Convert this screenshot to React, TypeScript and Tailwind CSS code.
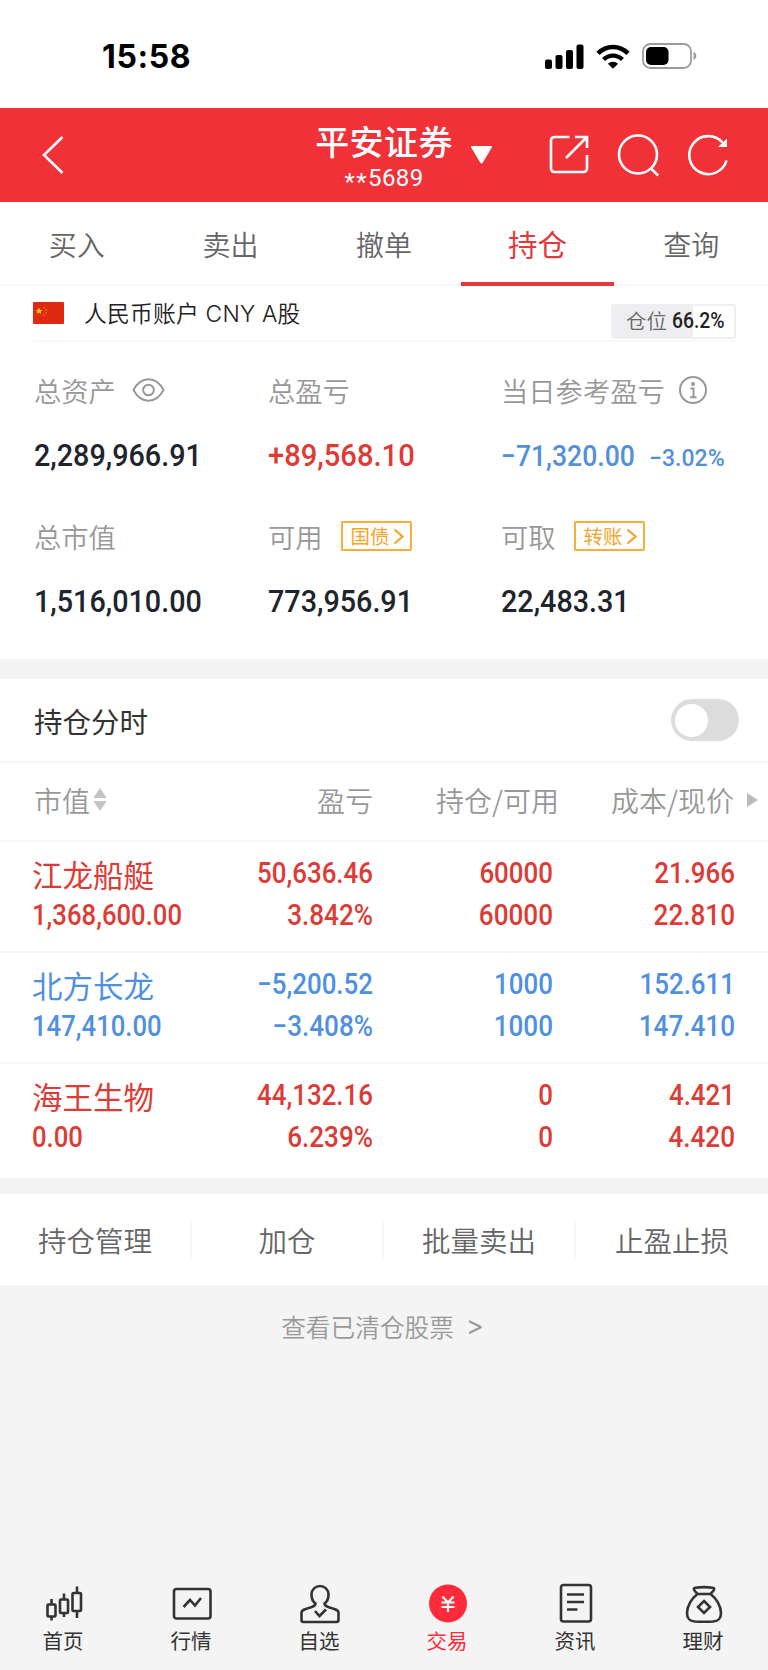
import { useState } from 'react';
import type { ReactNode } from 'react';
import clsx from 'clsx';

type Tone = 'up' | 'down';

type Holding = {
  name: string;
  value: string;
  profit: string;
  rate: string;
  amount: string;
  usable: string;
  cost: string;
  price: string;
  tone: Tone;
};

const TABS = ['买入', '卖出', '撤单', '持仓', '查询'];
const ACTIONS = ['持仓管理', '加仓', '批量卖出', '止盈止损'];

const HOLDINGS: Holding[] = [
  { name: '江龙船艇', value: '1,368,600.00', profit: '50,636.46', rate: '3.842%', amount: '60000', usable: '60000', cost: '21.966', price: '22.810', tone: 'up' },
  { name: '北方长龙', value: '147,410.00', profit: '−5,200.52', rate: '−3.408%', amount: '1000', usable: '1000', cost: '152.611', price: '147.410', tone: 'down' },
  { name: '海王生物', value: '0.00', profit: '44,132.16', rate: '6.239%', amount: '0', usable: '0', cost: '4.421', price: '4.420', tone: 'up' },
];

// Narrow figures used for every amount on the page.
function Num({ children, className, right }: { children: ReactNode; className?: string; right?: boolean }) {
  return (
    <span
      className={clsx(
        'block whitespace-nowrap font-[Roboto,sans-serif] font-medium',
        right ? 'origin-right' : 'origin-left',
        className,
      )}
    >
      {children}
    </span>
  );
}

function StatusBar() {
  return (
    <div className="flex h-[108px] items-start justify-between bg-white pr-[71px] pl-[102px] text-black">
      <span className="mt-[38px] font-[Inter,sans-serif] text-[32px] leading-[38px] font-bold tracking-[0.6px]">15:58</span>
      <div className="mt-[43px] flex items-center">
        <svg width="39" height="25" viewBox="0 0 39 25" fill="currentColor">
          <rect x="0" y="15.5" width="7" height="9.5" rx="2" />
          <rect x="10.5" y="11" width="7" height="14" rx="2" />
          <rect x="21" y="6" width="7" height="19" rx="2" />
          <rect x="31.5" y="0.5" width="7" height="24.5" rx="2" />
        </svg>
        <svg className="ml-3" width="34" height="25" viewBox="0 0 34 25" fill="none" stroke="currentColor">
          <path d="M2 9.3C10.5 .8 23.5 .8 32 9.3" strokeWidth="4.6" />
          <path d="M7.6 15.5C13 10.3 21 10.3 26.4 15.5" strokeWidth="4.4" />
          <path d="M17 24.8 11.9 19.8C14.8 17.1 19.2 17.1 22.1 19.8Z" fill="currentColor" stroke="none" />
        </svg>
        <svg className="ml-3" width="55" height="26" viewBox="0 0 55 26">
          <rect x="1" y="1" width="48" height="24" rx="7.5" fill="none" stroke="#9b9b9b" strokeWidth="1.8" />
          <rect x="4" y="4" width="22.5" height="18" rx="5" fill="#000" />
          <path d="M51.5 9v8c1.8-.6 2.8-2.2 2.8-4s-1-3.4-2.8-4Z" fill="#9b9b9b" />
        </svg>
      </div>
    </div>
  );
}

function Header() {
  return (
    <header className="grid h-[94px] grid-cols-[1fr_auto_1fr] items-center bg-[#f03138] text-white">
      <svg className="ml-[41px]" width="24" height="40" viewBox="0 0 24 40" fill="none" stroke="currentColor" strokeWidth="2.6">
        <path d="M21.5 2 3 20l18.5 18" />
      </svg>
      <div className="flex flex-col items-center gap-[7px] pt-[2px]">
        <span className="text-[34px] leading-[36px] font-medium tracking-[0.4px] whitespace-nowrap">平安证券</span>
        <Num className="text-[24px] leading-[24px] font-normal tracking-[0.4px]">
          <span className="inline-block translate-y-[4px] tracking-[1.5px]">**</span>5689
        </Num>
      </div>
      <div className="flex items-center">
        <svg className="ml-[17px]" width="23" height="18" viewBox="0 0 23 18" fill="currentColor">
          <path d="M2 0h19a1 1 0 0 1 .8 1.6L12.7 16.8a1.4 1.4 0 0 1-2.4 0L1.2 1.6A1 1 0 0 1 2 0Z" />
        </svg>
        <svg className="ml-[55px]" width="42" height="42" viewBox="0 0 42 42" fill="none" stroke="currentColor" strokeWidth="2.6">
          <path d="M21.5 3H6.5A3.5 3.5 0 0 0 3 6.5v28A3.5 3.5 0 0 0 6.5 38h29a3.5 3.5 0 0 0 3.5-3.5V21" />
          <path d="M27 3h12v11M39 3 18 24" />
        </svg>
        <svg className="ml-[26px]" width="44" height="44" viewBox="0 0 44 44" fill="none" stroke="currentColor" strokeWidth="2.6">
          <circle cx="22" cy="21.5" r="19" />
          <path d="M34.5 35 42 42.5" />
        </svg>
        <svg className="ml-[28px]" width="42" height="44" viewBox="0 0 42 44" fill="none" stroke="currentColor" strokeWidth="2.6">
          <path d="M34.5 9.5A19 19 0 1 0 38.5 27.5" />
          <path d="M39 5.500v8.500h-9Z" fill="currentColor" stroke="none" />
        </svg>
      </div>
    </header>
  );
}

function LinkTag({ children }: { children: ReactNode }) {
  return (
    <button className="ml-[18px] flex h-[30px] w-[71px] items-center rounded-[2px] border-2 border-[#f7ae3d] pl-[8px] text-[19.5px] leading-none font-normal text-[#f5a52c]">
      {children}
      <svg className="ml-[3px]" width="11" height="17" viewBox="0 0 11 17" fill="none" stroke="currentColor" strokeWidth="2.2">
        <path d="m1.5 1.5 8 7-8 7" />
      </svg>
    </button>
  );
}

function Stat({ label, extra, className, children }: { label: string; extra?: ReactNode; className?: string; children: ReactNode }) {
  return (
    <div>
      <div className="flex h-[32px] items-center text-[27.3px] font-[350] text-[#989898]">
        <span className="whitespace-nowrap">{label}</span>
        {extra}
      </div>
      <div className={clsx('flex h-[40px] items-baseline leading-[40px]', className)}>{children}</div>
    </div>
  );
}

function Summary() {
  return (
    <section className="grid h-[317px] grid-cols-[234px_233px_1fr] content-start gap-y-[44px] bg-white pt-[32px] pl-[34px]">
      <Stat
        label="总资产"
        extra={
          <svg className="ml-[16px]" width="33" height="26" viewBox="0 0 34 26" fill="none" stroke="currentColor" strokeWidth="2">
            <path d="M1.5 13C5.5 5.5 11 2 17 2s11.5 3.5 15.5 11C28.5 20.5 23 24 17 24S5.5 20.5 1.5 13Z" />
            <circle cx="17" cy="13" r="5.5" />
          </svg>
        }
        className="mt-[30px] text-[31.5px] text-[#20242c]"
      >
        <Num className="scale-x-[.912]">2,289,966.91</Num>
      </Stat>
      <Stat label="总盈亏" className="mt-[30px] text-[31.5px] text-[#e03a35]">
        <Num className="scale-x-[.925]">+89,568.10</Num>
      </Stat>
      <Stat
        label="当日参考盈亏"
        extra={
          <svg className="ml-[13px]" width="30" height="30" viewBox="0 0 30 30" fill="none" stroke="currentColor" strokeWidth="2">
            <circle cx="15" cy="15" r="13" />
            <circle cx="15" cy="9" r="2" fill="currentColor" stroke="none" />
            <path d="M12.5 13.5H15.5V22M12 22.2h6.5" />
          </svg>
        }
        className="mt-[30px] text-[29px] text-[#5490da]"
      >
        <Num className="w-[148px] scale-x-[.915]">−71,320.00</Num>
        <Num className="scale-x-[.96] text-[24px]">−3.02%</Num>
      </Stat>
      <Stat label="总市值" className="mt-[30px] text-[31.5px] text-[#20242c]">
        <Num className="scale-x-[.912]">1,516,010.00</Num>
      </Stat>
      <Stat label="可用" extra={<LinkTag>国债</LinkTag>} className="mt-[30px] text-[31.5px] text-[#20242c]">
        <Num className="scale-x-[.912]">773,956.91</Num>
      </Stat>
      <Stat label="可取" extra={<LinkTag>转账</LinkTag>} className="mt-[30px] text-[31.5px] text-[#20242c]">
        <Num className="scale-x-[.912]">22,483.31</Num>
      </Stat>
    </section>
  );
}

function HoldingRow({ item, last }: { item: Holding; last: boolean }) {
  const pairs = [
    [item.profit, item.rate],
    [item.amount, item.usable],
    [item.cost, item.price],
  ];
  return (
    <div
      className={clsx(
        'grid grid-cols-[182px_159px_180px_182px] content-start pt-[10px] pl-[32px]',
        last ? 'h-[114px]' : 'h-[111px] border-b-2 border-[#f7f7f7]',
        item.tone === 'up' ? 'text-[#dd3b36]' : 'text-[#4f90e0]',
      )}
    >
      <div>
        <div className="h-[42px] text-[30.5px] leading-[45px] whitespace-nowrap">{item.name}</div>
        <Num className="scale-x-[.886] text-[29px] leading-[42px]">{item.value}</Num>
      </div>
      {pairs.map(([top, bottom], i) => (
        <div key={i} className="text-right text-[29px] leading-[42px]">
          <Num right className="scale-x-[.893]">{top}</Num>
          <Num right className="scale-x-[.9]">{bottom}</Num>
        </div>
      ))}
    </div>
  );
}

function NavItem({ label, active, children }: { label: string; active?: boolean; children: ReactNode }) {
  return (
    <button className={clsx('flex flex-col items-center', active ? 'text-[#ff2b3b]' : 'text-[#333]')}>
      <svg className="ml-[2px]" width="42" height="42" viewBox="0 0 42 42" fill="none" stroke="currentColor" strokeWidth="2.6">
        {children}
      </svg>
      <span className="mt-[4px] text-[20.5px] leading-[24px]">{label}</span>
    </button>
  );
}

function BottomNav() {
  return (
    <nav className="mt-auto -ml-[1px] grid h-[88px] w-[768px] shrink-0 grid-cols-6">
      <NavItem label="首页">
        <rect x="4.5" y="22.5" width="8" height="12" rx="1" />
        <path d="M8.5 17V22.5M8.5 34.5v4" />
        <rect x="17" y="17.5" width="8" height="13.5" rx="1" />
        <path d="M21 11.5v6M21 31v4" />
        <rect x="29.5" y="11" width="8.5" height="18" rx="1" />
        <path d="M34 4.5v6.5M34 29v7" />
      </NavItem>
      <NavItem label="行情">
        <rect x="3" y="7" width="36.5" height="29.5" rx="2.5" />
        <path d="m12.5 25 6.5-7 5 5.5 6-7.5" />
      </NavItem>
      <NavItem label="自选">
        <path d="M16.5 21.5C13.5 19.5 12.5 15 12.5 12.5 12.5 7.5 16.5 4 21 4s8.5 3.5 8.5 8.5c0 2.5-1 7-4 9 .2 2 2 3 5 4 5 1.5 9 2.5 9 5v7.5a2 2 0 0 1-2 2h-33a2 2 0 0 1-2-2v-7.5c0-2.5 4-3.5 9-5 3-1 4.8-2 5-4Z" />
        <path d="m16 29 4.500 5 6.500-6.500" />
      </NavItem>
      <NavItem label="交易" active>
        <circle cx="21" cy="21.5" r="19" fill="currentColor" stroke="none" />
        <path d="m15.5 14.5 5.5 6 5.5-6M21 20.5V30M14.5 20.5h13M14.5 25h13" stroke="#fff" strokeWidth="2.2" />
      </NavItem>
      <NavItem label="资讯">
        <rect x="6" y="3" width="30" height="36.5" rx="2.5" />
        <path d="M12 12.5h17M12 20h17M12 27.5h10.5" />
      </NavItem>
      <NavItem label="理财">
        <path d="M14.500 12 11.500 8.500c-1.200-1.800-.6-2.500.8-2.700 5.500-.9 12-.9 17.400 0 1.400.2 2 .9.800 2.700l-3 3.500" />
        <path d="M14.5 12h13C33.5 16.500 38 24 38 31c0 6-2.500 8-8 8.500q-9 .6-18 0c-5.500-.5-8-2.500-8-8.500C4 24 8.500 16.500 14.500 12Z" />
        <path d="m21 19 6 6-6 6-6-6Z" />
      </NavItem>
    </nav>
  );
}

export default function App() {
  const [tab, setTab] = useState('持仓');
  const [chart, setChart] = useState(false);

  return (
    <div className="flex h-[1670px] w-[768px] flex-col overflow-hidden bg-[#f4f4f4] font-['Noto_Sans_CJK_SC',sans-serif]">
      <StatusBar />
      <Header />

      <div className="grid h-[84px] shrink-0 grid-cols-5 border-b-2 border-[#f7f7f7] bg-white">
        {TABS.map((t) => (
          <button
            key={t}
            onClick={() => setTab(t)}
            className={clsx(
              '-mb-[2px] border-b-4 pt-[3px]',
              t === tab ? 'border-[#e4393c] text-[29.5px] text-[#e4393c]' : 'border-transparent text-[28px] font-[350] text-[#666]',
            )}
          >
            {t}
          </button>
        ))}
      </div>

      {/* Account */}
      <div className="shrink-0 bg-white px-[33px]">
        <div className="flex h-[56px] items-start border-b-2 border-[#f8f8f8]">
          <svg className="mt-[16px]" width="31" height="22" viewBox="0 0 31 22">
            <rect width="31" height="22" rx="1" fill="#dd2a10" />
            <path d="m6 5.5 1 2.5h2.4L7.6 9.6l.7 2.4L6 10.6l-2.3 1.4.7-2.4L2.6 8H5Z" fill="#fbd20a" />
            <path d="M10.5 5.5c4 1.5 4 6.5 0 8" fill="none" stroke="#ea7a14" strokeWidth="1.4" strokeDasharray="1.5 1.5" />
          </svg>
          <span className="mt-[11px] ml-[20px] font-[Inter,'Noto_Sans_CJK_SC',sans-serif] text-[22.8px] leading-[34px] font-[350] tracking-[0.2px] whitespace-nowrap text-[#222]">
            人民币账户 CNY A股
          </span>
          <div className="mt-[18px] -mr-[1px] ml-auto flex h-[35px] w-[125px] items-center rounded-[3px] border-2 border-[#efeff1] bg-[linear-gradient(90deg,#eeeef0_66.2%,#fff_66.2%)] pl-[13px] text-[20.5px] leading-[28px]">
            <span className="-mt-[3px] font-[350] text-[#666]">仓位</span>
            <Num className="-mt-[1px] ml-[5px] scale-x-[.9] text-[21.5px] text-[#222]">66.2%</Num>
          </div>
        </div>
      </div>

      <Summary />

      <div className="mt-[20px] flex h-[84px] shrink-0 items-center justify-between border-b-2 border-[#f7f7f7] bg-white pr-[29px] pl-[34px]">
        <span className="mt-[2px] text-[28.5px] text-[#333]">持仓分时</span>
        <button
          onClick={() => setChart(!chart)}
          className={clsx('flex h-[42px] w-[68px] items-center rounded-full p-[4px]', chart ? 'justify-end bg-[#f03138]' : 'bg-[#dcdcdc]')}
        >
          <span className="size-[33px] rounded-full bg-white" />
        </button>
      </div>

      <div className="shrink-0 bg-white">
        <div className="grid h-[79px] grid-cols-[180px_159px_186px_175px_34px] items-center border-b-2 border-[#f6f6f6] pb-[4px] pl-[34px] text-right text-[28px] font-[350] text-[#989898]">
          <span className="flex items-center">
            市值
            <svg className="ml-[3px]" width="14" height="23" viewBox="0 0 14 24" fill="#c4c4c4">
              <path d="M7 0l7 10.500H0ZM7 24l7-10.500H0Z" />
            </svg>
          </span>
          <span>盈亏</span>
          <span>持仓/可用</span>
          <span>成本/现价</span>
          <svg className="ml-[13px]" width="11" height="14" viewBox="0 0 11 14" fill="#bbb">
            <path d="M0 0l11 7-11 7Z" />
          </svg>
        </div>
        {HOLDINGS.map((h, i) => (
          <HoldingRow key={h.name} item={h} last={i === HOLDINGS.length - 1} />
        ))}
      </div>

      <div className="mt-[16px] grid h-[91px] shrink-0 grid-cols-4 items-center bg-white text-[28.5px] font-[350] text-[#666]">
        {ACTIONS.map((a, i) => (
          <button key={a} className={clsx('h-[38px] leading-[38px]', i < ACTIONS.length - 1 && 'border-r-2 border-[#f5f5f5]')}>
            {a}
          </button>
        ))}
      </div>

      <button className="mt-[22px] -ml-[3px] flex items-center self-center text-[24.7px] leading-[38px] font-[350] text-[#999]">
        查看已清仓股票
        <span className="ml-[12px] font-[Inter,sans-serif] text-[27px] font-normal">&gt;</span>
      </button>

      <BottomNav />
    </div>
  );
}
